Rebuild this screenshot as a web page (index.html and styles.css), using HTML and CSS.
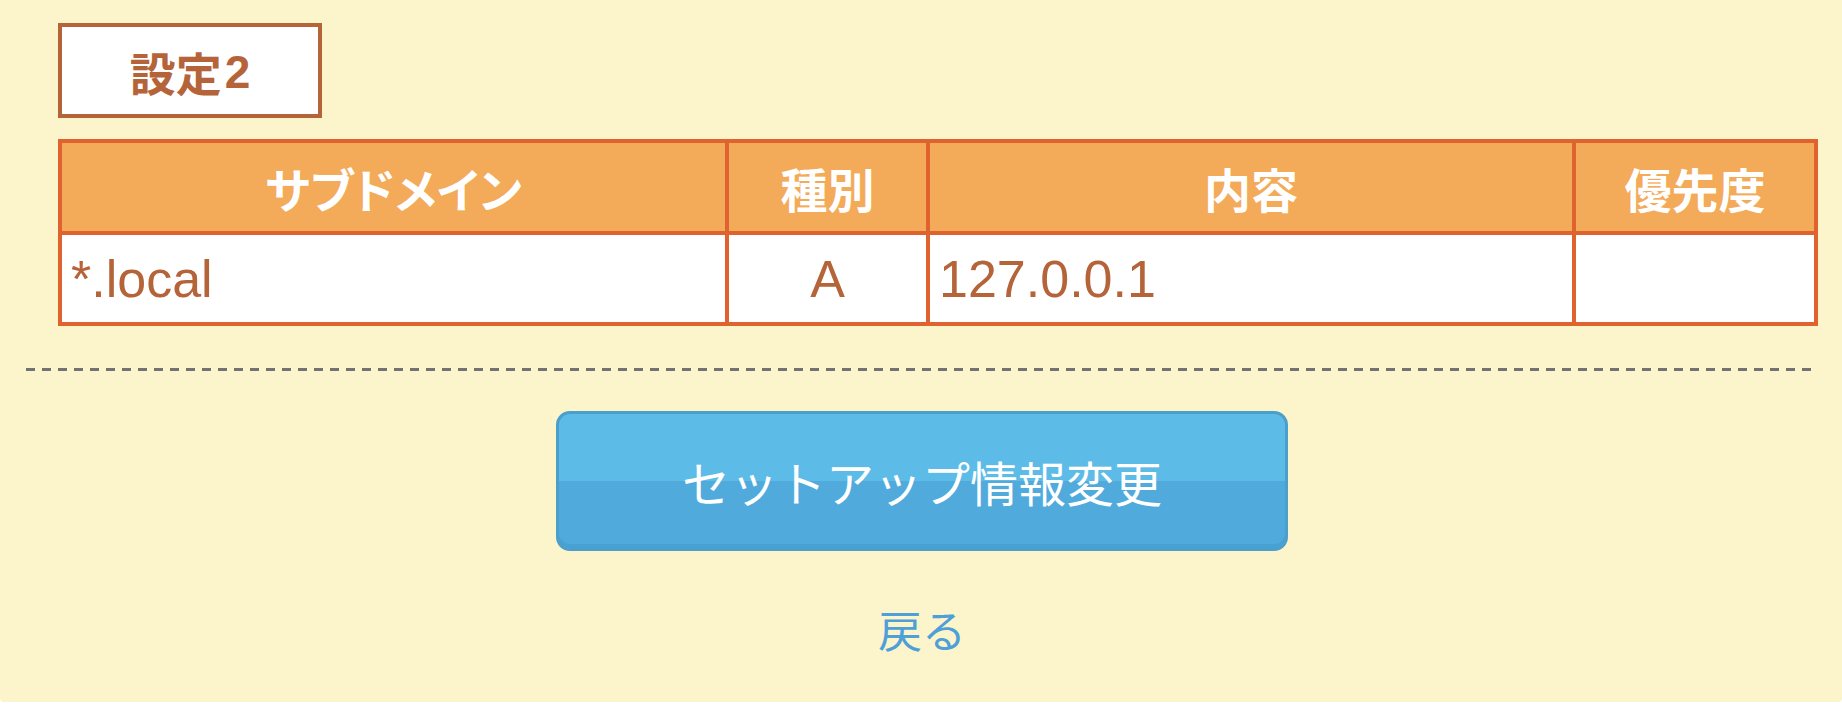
FILE: index.html
```html
<!DOCTYPE html>
<html lang="ja">
<head>
<meta charset="utf-8">
<title>設定2</title>
<link rel="stylesheet" href="styles.css">
</head>
<body>
<div class="page">
  <div class="title-box">設定<span class="num">2</span></div>
  <table class="dns-table">
    <colgroup>
      <col class="c1"><col class="c2"><col class="c3"><col class="c4">
    </colgroup>
    <thead>
      <tr>
        <th>サブドメイン</th>
        <th>種別</th>
        <th>内容</th>
        <th>優先度</th>
      </tr>
    </thead>
    <tbody>
      <tr>
        <td class="left">*.local</td>
        <td class="center">A</td>
        <td class="left">127.0.0.1</td>
        <td></td>
      </tr>
    </tbody>
  </table>
  <div class="divider"></div>
  <div class="actions">
    <button class="btn-primary" type="button">セットアップ情報変更</button>
  </div>
  <div class="back-row">
    <a class="back-link" href="#">戻る</a>
  </div>
</div>
</body>
</html>
```

FILE: styles.css
```css
html, body {
  margin: 0;
  padding: 0;
  background: #ffffff;
}

body {
  font-family: "Noto Sans CJK JP", "Noto Sans", sans-serif;
}

.page {
  background: #fcf5cb;
  height: 702px;
  box-sizing: border-box;
  padding: 23px 24px 0 26px;
  border-radius: 0 0 4px 4px;
}

.title-box {
  margin-left: 32px;
  width: 264px;
  height: 95px;
  box-sizing: border-box;
  border: 4px solid #b5643a;
  background: #ffffff;
  color: #b5643a;
  font-weight: 700;
  font-size: 46px;
  line-height: 1;
  display: flex;
  align-items: center;
  justify-content: center;
}

.title-box .num {
  font-family: "Liberation Sans", Arial, sans-serif;
  font-weight: 700;
  margin-left: 3px;
  position: relative;
  top: 1px;
}

.dns-table {
  margin: 21px 0 0 32px;
  width: 1760px;
  table-layout: fixed;
  border-collapse: separate;
  border-spacing: 4px;
  background: #e0622e;
}

.dns-table col.c1 { width: 663px; }
.dns-table col.c2 { width: 197px; }
.dns-table col.c3 { width: 642px; }
.dns-table col.c4 { width: 238px; }

.dns-table th {
  background: #f3aa59;
  color: #ffffff;
  font-family: "Noto Sans CJK JP", sans-serif;
  font-weight: 700;
  font-size: 47px;
  font-feature-settings: "palt";
  line-height: 1;
  height: 88px;
  padding: 0;
  text-align: center;
  vertical-align: middle;
}

.dns-table td {
  background: #ffffff;
  color: #b5643a;
  font-family: "Liberation Sans", Arial, sans-serif;
  font-size: 52px;
  line-height: 1;
  height: 87px;
  padding: 0 9px;
  vertical-align: middle;
}

.dns-table td.left { text-align: left; }
.dns-table td.center { text-align: center; }

.divider {
  margin-top: 42px;
  height: 3px;
  background: repeating-linear-gradient(to right, #727272 0, #727272 9px, transparent 9px, transparent 16px);
}

.actions {
  display: flex;
  justify-content: center;
  margin-top: 40px;
}

.btn-primary {
  width: 732px;
  height: 140px;
  box-sizing: border-box;
  border: 3px solid #4a9fcb;
  border-radius: 14px;
  background: linear-gradient(to bottom, #5dbbe7 0, #5dbbe7 50%, #50aadc 50%, #50aadc 100%);
  box-shadow: inset 0 -4px 0 rgba(40, 120, 170, 0.18);
  color: #ffffff;
  font-family: "Noto Sans CJK JP", sans-serif;
  font-size: 48px;
  font-weight: 400;
  line-height: 1;
  padding: 0;
  cursor: pointer;
}

.back-row {
  display: flex;
  justify-content: center;
  margin-top: 56px;
}

.back-link {
  color: #4f9fd8;
  font-family: "Noto Sans CJK JP", sans-serif;
  font-size: 44px;
  line-height: 1;
  text-decoration: none;
}
```
